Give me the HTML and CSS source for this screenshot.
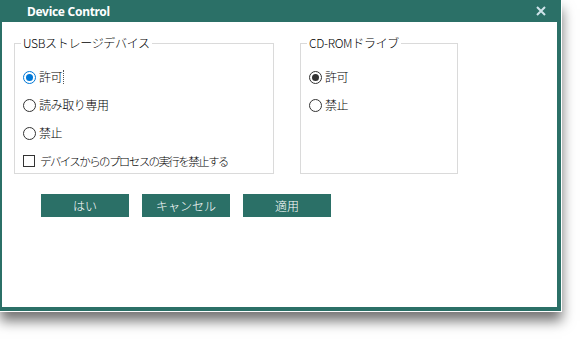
FILE: index.html
```html
<!DOCTYPE html>
<html lang="ja">
<head>
  <meta charset="UTF-8">
  <title>Device Control</title>
  <link rel="stylesheet" href="styles.css">
</head>
<body>
  <div class="window">
    <div class="titlebar">
      <span class="title">Device Control</span>
      <svg class="close" width="10" height="10" viewBox="0 0 10 10">
        <path d="M1 1 L9 9 M9 1 L1 9" stroke="#cfe3ea" stroke-width="2" fill="none"/>
      </svg>
    </div>
    <div class="content">
      <div class="groups">
        <fieldset class="group group-usb">
          <legend>USBストレージデバイス</legend>
          <div class="row"><span class="radio checked focus"></span><span class="label focused">許可</span></div>
          <div class="row"><span class="radio"></span><span class="label">読み取り専用</span></div>
          <div class="row"><span class="radio"></span><span class="label">禁止</span></div>
          <div class="row"><span class="check"></span><span class="label narrow">デバイスからのプロセスの実行を禁止する</span></div>
        </fieldset>
        <fieldset class="group group-cd">
          <legend>CD-ROMドライブ</legend>
          <div class="row"><span class="radio checked"></span><span class="label">許可</span></div>
          <div class="row"><span class="radio"></span><span class="label">禁止</span></div>
        </fieldset>
      </div>
      <div class="buttons">
        <button class="btn">はい</button>
        <button class="btn">キャンセル</button>
        <button class="btn">適用</button>
      </div>
    </div>
  </div>
</body>
</html>
```

FILE: styles.css
```css
* {
  margin: 0;
  padding: 0;
  box-sizing: border-box;
}
html,
body {
  height: 100%;
}
body {
  background-color: #fff;
  font-family: "Noto Sans CJK JP", "Noto Sans", sans-serif;
  font-size: 12px;
  font-weight: 300;
  color: #000;
}
.window {
  width: 562px;
  background-color: #2b7067;
  padding: 0 4px 4px 2px;
  border-right: 1px solid #fff;
  border-bottom: 1px solid #fff;
  box-shadow: 0 9px 12px rgba(0, 0, 0, 0.55);
}
.titlebar {
  height: 22px;
  display: flex;
  align-items: center;
  justify-content: space-between;
  padding: 0 11px 0 25px;
}
.title {
  color: #fff;
  font-family: "Noto Sans", sans-serif;
  font-weight: bold;
  font-size: 12px;
  letter-spacing: -0.3px;
}
.close {
  display: block;
}
.content {
  background-color: #fff;
  height: 285px;
  padding: 14px 0 0 12px;
}
.groups {
  display: flex;
  gap: 26px;
}
.group {
  border: 1px solid #dadada;
  height: 138px;
  padding: 0 0 0 8px;
  min-width: 0;
}
.group-usb {
  width: 260px;
}
.group-cd {
  width: 158px;
}
.group legend {
  margin-left: -2px;
  padding: 0 2px;
  line-height: 14px;
  font-size: 12px;
  letter-spacing: -0.3px;
}
.row {
  display: flex;
  align-items: center;
  height: 16px;
  margin-top: 12px;
  line-height: 16px;
}
.row:first-of-type {
  margin-top: 19px;
}
.radio {
  width: 13px;
  height: 13px;
  border: 1px solid #333;
  border-radius: 50%;
  display: flex;
  align-items: center;
  justify-content: center;
  margin-right: 3px;
  flex: none;
}
.radio.checked::after {
  content: "";
  width: 7px;
  height: 7px;
  border-radius: 50%;
  background-color: #333;
}
.radio.focus {
  border-color: #0078d7;
}
.radio.focus::after {
  background-color: #0078d7;
}
.check {
  width: 12px;
  height: 12px;
  border: 1px solid #333;
  margin-right: 5px;
  flex: none;
}
.label {
  white-space: nowrap;
  letter-spacing: -0.4px;
}
.label.narrow {
  font-size: 11.5px;
  letter-spacing: -1.6px;
}
.label.focused {
  padding-right: 1px;
  border-right: 1px dotted #555;
  line-height: 14px;
}
.buttons {
  display: flex;
  gap: 13px;
  margin-top: 20px;
  padding-left: 27px;
}
.btn {
  width: 88px;
  height: 23px;
  border: none;
  background-color: #2b7067;
  color: #fff;
  font-family: "Noto Sans CJK JP", sans-serif;
  font-size: 12px;
  font-weight: 300;
}
```
